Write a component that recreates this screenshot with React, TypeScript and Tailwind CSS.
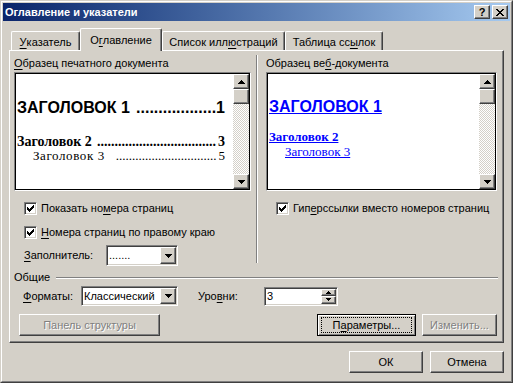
import React from "react";

const raised =
  "border border-t-white border-l-white border-r-[#404040] border-b-[#404040] shadow-[inset_-1px_-1px_#808080]";
const sunken =
  "border border-t-[#808080] border-l-[#808080] border-r-white border-b-white shadow-[inset_1px_1px_#404040,inset_-1px_-1px_#d4d0c8]";
const disabledText = "text-[#808080] [text-shadow:1px_1px_0_#ffffff]";

function U({ children }: { children: React.ReactNode }) {
  return <span className="underline underline-offset-[2px]">{children}</span>;
}

// pixel triangle, rows of 1px
function Arrow({ dir, size = 4 }: { dir: "up" | "down"; size?: number }) {
  const w = size * 2 - 1;
  return (
    <svg width={w} height={size} viewBox={`0 0 ${w} ${size}`} shapeRendering="crispEdges">
      {Array.from({ length: size }).map((_, i) => (
        <rect
          key={i}
          x={i}
          y={dir === "down" ? i : size - 1 - i}
          width={w - i * 2}
          height={1}
          fill="#000"
        />
      ))}
    </svg>
  );
}

function CloseGlyph() {
  return (
    <svg width="8" height="7" viewBox="0 0 8 7" shapeRendering="crispEdges">
      {Array.from({ length: 7 }).map((_, y) => (
        <g key={y}>
          <rect x={y} y={y} width={2} height={1} fill="#000" />
          <rect x={6 - y} y={y} width={2} height={1} fill="#000" />
        </g>
      ))}
    </svg>
  );
}

const checkPixels = [
  [6, 0, 1], [5, 1, 2], [0, 2, 1], [4, 2, 3], [0, 3, 2], [3, 3, 3], [0, 4, 5], [1, 5, 3], [2, 6, 1],
];

function CheckBox() {
  return (
    <div className={`w-[13px] h-[13px] shrink-0 bg-white flex items-center justify-center ${sunken}`}>
      <svg width="7" height="7" viewBox="0 0 7 7" shapeRendering="crispEdges">
        {checkPixels.map(([x, y, w], i) => (
          <rect key={i} x={x} y={y} width={w} height={1} fill="#000" />
        ))}
      </svg>
    </div>
  );
}

function ScrollBar() {
  return (
    <div className="w-[16px] flex flex-col">
      <div className={`h-[15px] bg-[#d4d0c8] flex items-center justify-center ${raised}`}>
        <Arrow dir="up" />
      </div>
      <div className={`h-[15px] bg-[#d4d0c8] ${raised}`} />
      <div className="flex-1 bg-[repeating-conic-gradient(#d4d0c8_0%_25%,#ffffff_0%_50%)] bg-[length:2px_2px]" />
      <div className={`h-[15px] bg-[#d4d0c8] flex items-center justify-center ${raised}`}>
        <Arrow dir="down" />
      </div>
    </div>
  );
}

function Preview({ children }: { children: React.ReactNode }) {
  return (
    <div className="h-[119px] border border-t-[#808080] border-l-[#808080] border-r-white border-b-white">
      <div className="h-full border border-black flex">
        <div className="flex-1 bg-white">{children}</div>
        <ScrollBar />
      </div>
    </div>
  );
}

function Leader({ n }: { n: number }) {
  return <span className="flex-1 text-right whitespace-nowrap">{".".repeat(n)}</span>;
}

function Combo({ text, className }: { text: string; className: string }) {
  return (
    <div className={`bg-white flex p-px ${sunken} ${className}`}>
      <div className="flex-1 flex items-center pl-[1px] whitespace-nowrap">{text}</div>
      <div className={`w-[16px] bg-[#d4d0c8] flex items-center justify-center ${raised}`}>
        <Arrow dir="down" />
      </div>
    </div>
  );
}

function Spinner() {
  return (
    <div className={`w-[74px] h-[19px] bg-white flex p-px ${sunken}`}>
      <div className="flex-1 flex items-center pl-[1px]">3</div>
      <div className="w-[15px] flex flex-col">
        <div className={`flex-1 bg-[#d4d0c8] flex items-center justify-center ${raised}`}>
          <Arrow dir="up" size={3} />
        </div>
        <div className={`flex-1 bg-[#d4d0c8] flex items-center justify-center ${raised}`}>
          <Arrow dir="down" size={3} />
        </div>
      </div>
    </div>
  );
}

function Button({ children, className, disabled }: { children: React.ReactNode; className: string; disabled?: boolean }) {
  return (
    <div className={`h-[22px] bg-[#d4d0c8] flex items-center justify-center ${raised} ${disabled ? disabledText : ""} ${className}`}>
      {children}
    </div>
  );
}

const tabs = [
  { label: <><U>У</U>казатель</>, w: "w-[69px]" },
  { label: <>О<U>г</U>лавление</>, w: "w-[82px]", active: true },
  { label: <>Список илл<U>ю</U>страций</>, w: "w-[123px]" },
  { label: <>Таблица сс<U>ы</U>лок</>, w: "w-[98px]" },
];

export default function App() {
  return (
    <div className="w-[513px] h-[383px] bg-[#d4d0c8] font-['Liberation_Sans',Arial,sans-serif] text-[11px] leading-[13px] text-black select-none">
      <div className="h-full border border-t-[#d4d0c8] border-l-[#d4d0c8] border-r-[#404040] border-b-[#404040]">
        <div className="h-full border border-t-white border-l-white border-r-[#808080] border-b-[#808080] p-px flex flex-col">
          {/* title bar */}
          <div className="h-[18px] flex items-center px-[2px] bg-linear-to-r from-[#0a246a] to-[#a6caf0]">
            <div className="flex-1 font-bold text-white">Оглавление и указатели</div>
            <div className={`w-[16px] h-[14px] bg-[#d4d0c8] flex items-center justify-center font-bold text-[11px] leading-none ${raised}`}>
              ?
            </div>
            <div className={`ml-[2px] w-[16px] h-[14px] bg-[#d4d0c8] flex items-center justify-center ${raised}`}>
              <CloseGlyph />
            </div>
          </div>

          <div className="flex flex-col px-[6px] pt-[7px]">
            {/* tabs */}
            <div className="h-[22px] flex items-end pl-[2px]">
              {tabs.map((t, i) =>
                t.active ? (
                  <div
                    key={i}
                    className={`${t.w} h-[23px] -mb-px relative z-10 bg-[#d4d0c8] flex justify-center pt-[5px] border-t border-l border-r border-t-white border-l-white border-r-[#404040] shadow-[inset_-1px_0_#808080] rounded-t-[2px] whitespace-nowrap`}
                  >
                    {t.label}
                  </div>
                ) : (
                  <div
                    key={i}
                    className={`${t.w} h-[19px] bg-[#d4d0c8] flex justify-center pt-[4px] border-t border-l border-r border-t-white border-l-white border-r-[#404040] shadow-[inset_-1px_0_#808080] rounded-t-[2px] whitespace-nowrap`}
                  >
                    {t.label}
                  </div>
                )
              )}
            </div>

            {/* tab panel */}
            <div className="h-[293px] flex flex-col border border-t-white border-l-white border-r-[#404040] border-b-[#404040] shadow-[inset_-1px_-1px_#808080]">
              <div className="h-[215px] flex pl-[4px] pr-[6px]">
                {/* printed preview */}
                <div className="w-[237px] flex flex-col pt-[6px]">
                  <div>
                    <U>О</U>бразец печатного документа
                  </div>
                  <div className="mt-[2px]">
                    <Preview>
                      <div className="pl-[1px] pr-[8px] pt-[25px]">
                        <div className="flex font-bold text-[16px] leading-[18px] font-['Liberation_Sans',Arial,sans-serif]">
                          <span className="whitespace-nowrap">ЗАГОЛОВОК 1</span>
                          <Leader n={18} />
                          <span>1</span>
                        </div>
                        <div className="mt-[18px] flex font-bold text-[14px] leading-[14px] font-['Liberation_Serif','Times_New_Roman',serif]">
                          <span className="whitespace-nowrap">Заголовок 2</span>
                          <Leader n={34} />
                          <span className="pl-[2px]">3</span>
                        </div>
                        <div className="flex pl-[16px] text-[13px] leading-[13px] font-['Liberation_Serif','Times_New_Roman',serif]">
                          <span className="whitespace-nowrap tracking-[0.6px]">Заголовок 3</span>
                          <Leader n={31} />
                          <span className="pl-[2px]">5</span>
                        </div>
                      </div>
                    </Preview>
                  </div>
                  <div className="mt-[11px] ml-[10px] h-[13px] flex items-center gap-[4px]">
                    <CheckBox />
                    <span>
                      Показать но<U>м</U>ера страниц
                    </span>
                  </div>
                  <div className="mt-[11px] ml-[10px] h-[13px] flex items-center gap-[4px]">
                    <CheckBox />
                    <span>
                      <U>Н</U>омера страниц по правому краю
                    </span>
                  </div>
                  <div className="mt-[6px] ml-[10px] h-[21px] flex items-center">
                    <span className="w-[82px]">
                      <U>З</U>аполнитель:
                    </span>
                    <Combo text="......." className="w-[72px] h-[21px]" />
                  </div>
                </div>

                <div className="w-[2px] ml-[5px] mr-[8px] mt-[4px] mb-[3px] border-l border-r border-l-[#808080] border-r-white" />

                {/* web preview */}
                <div className="w-[231px] flex flex-col pt-[6px]">
                  <div>
                    Образец ве<U>б</U>-документа
                  </div>
                  <div className="mt-[2px]">
                    <Preview>
                      <div className="pl-[1px] pt-[24px] text-[#0000ff]">
                        <div className="w-fit font-bold text-[16px] leading-[18px] underline font-['Liberation_Sans',Arial,sans-serif]">
                          ЗАГОЛОВОК 1
                        </div>
                        <div className="w-fit mt-[14px] font-bold text-[13px] leading-[14px] underline font-['Liberation_Serif','Times_New_Roman',serif]">
                          Заголовок 2
                        </div>
                        <div className="w-fit ml-[16px] text-[13px] leading-[16px] underline font-['Liberation_Serif','Times_New_Roman',serif]">
                          Заголовок 3
                        </div>
                      </div>
                    </Preview>
                  </div>
                  <div className="mt-[11px] ml-[10px] h-[13px] flex items-center gap-[4px]">
                    <CheckBox />
                    <span>
                      Гип<U>е</U>рссылки вместо номеров страниц
                    </span>
                  </div>
                </div>
              </div>

              {/* general group */}
              <div className="mt-[5px] h-[13px] flex items-center pl-[4px] pr-[5px]">
                <span>Общие</span>
                <div className="flex-1 ml-[6px] h-[2px] border-t border-b border-t-[#808080] border-b-white" />
              </div>

              <div className="mt-[2px] h-[20px] flex items-center pl-[13px]">
                <span className="w-[58px]">
                  <U>Ф</U>орматы:
                </span>
                <Combo text="Классический" className="w-[97px] h-[20px]" />
                <span className="ml-[20px] w-[66px]">
                  Уро<U>в</U>ни:
                </span>
                <Spinner />
              </div>

              <div className="mt-[8px] h-[22px] flex pl-[9px] pr-[6px]">
                <Button className="w-[141px]" disabled>
                  Панель структуры
                </Button>
                <div className="flex-1" />
                <div className="w-[99px] h-[22px] bg-[#d4d0c8] flex px-[3px] py-[2px] border border-black shadow-[inset_1px_1px_#ffffff,inset_-1px_-1px_#808080]">
                  <div className="flex-1 flex items-center justify-center border border-dotted border-black">
                    <span>
                      П<U>а</U>раметры...
                    </span>
                  </div>
                </div>
                <Button className="ml-[6px] w-[75px]" disabled>
                  Изменить...
                </Button>
              </div>
            </div>

            {/* dialog buttons */}
            <div className="mt-[8px] flex justify-end gap-[7px]">
              <Button className="w-[74px]">ОК</Button>
              <Button className="w-[74px]">Отмена</Button>
            </div>
          </div>
        </div>
      </div>
    </div>
  );
}
